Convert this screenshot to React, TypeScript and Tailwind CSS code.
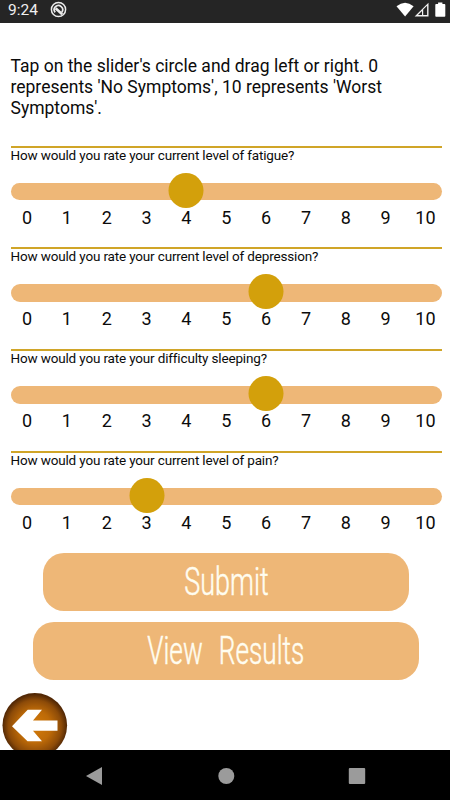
const QUESTIONS = [
  { text: 'How would you rate your current level of fatigue?', value: 4 },
  { text: 'How would you rate your current level of depression?', value: 6 },
  { text: 'How would you rate your difficulty sleeping?', value: 6 },
  { text: 'How would you rate your current level of pain?', value: 3 },
];

const TICKS = [0, 1, 2, 3, 4, 5, 6, 7, 8, 9, 10];

function StatusBar() {
  return (
    <header className="flex h-[22.5px] shrink-0 items-center bg-[#252525] pl-[8px] pr-[3.5px] text-[#f0f0f0]">
      <span className="-mt-[2px] w-[42px] text-[15.5px] leading-[20px]">9:24</span>
      <svg className="-mt-[3px] h-[17px] w-[17px]" viewBox="0 0 17 17" fill="none" stroke="#ececec">
        <circle cx="8.5" cy="8.5" r="7.1" strokeWidth="1.5" />
        <path d="M5.2 11.4A4.2 4.2 0 1 1 11.8 11.2" strokeWidth="1.7" />
        <path d="M5.6 7.2 12.2 13.2" strokeWidth="2.6" />
      </svg>
      <svg className="ml-auto h-[20px] w-[52px]" viewBox="0 0 52 20">
        <path d="M1.5 5.3Q10.1-2 18.6 5.3L10.1 15.6Z" fill="#fff" />
        <path d="M19.6 15.5 33.5 1.7V15.5Z" fill="#f2f2f2" />
        <path d="M23 14.1 27 10.1V14.1ZM28.2 8.5 32.1 4.8V14.1H28.2Z" fill="#252525" />
        <path d="M43.1 1.5h4.3v1.6h2.1q.8 0 .8.8v11.1q0 .8-.8.8h-8.4q-.8 0-.8-.8V3.9q0-.8.8-.8h2Z" fill="#fff" />
      </svg>
    </header>
  );
}

function Question({ text, value }: { text: string; value: number }) {
  return (
    <section className="flex h-[101.8px] flex-col">
      <div className="h-[2px] shrink-0 bg-[#d0a528]" />
      <p className="h-[34.9px] shrink-0 whitespace-nowrap text-[13.5px] leading-[15px] tracking-[-0.16px]">{text}</p>
      <div className="relative h-[17.5px] shrink-0 rounded-full bg-[#eeb777]">
        <span
          className="absolute -top-[10px] h-[35px] w-[35px] -translate-x-1/2 rounded-full bg-[#d3a00b]"
          style={{ left: 16.5 + value * 39.85 }}
        />
      </div>
      <div className="-ml-[3.4px] mt-[6.6px] flex w-[438.35px] text-center text-[18px] leading-[21px]">
        {TICKS.map((n) => (
          <span key={n} className="w-[39.85px] shrink-0">{n}</span>
        ))}
      </div>
    </section>
  );
}

export default function App() {
  return (
    <div className="flex h-[800px] w-[450px] flex-col overflow-hidden bg-white font-['Roboto',sans-serif] text-[#0b0b0b]">
      <StatusBar />
      <main className="flex h-[727.5px] shrink-0 flex-col overflow-hidden pl-[10.5px] pr-[8.5px]">
        <p className="mt-[33.5px] h-[89.7px] shrink-0 whitespace-nowrap text-[17.5px] leading-[21px]">
          Tap on the slider's circle and drag left or right. 0<br />
          represents 'No Symptoms', 10 represents 'Worst<br />
          Symptoms'.
        </p>
        <div className="shrink-0">
          {QUESTIONS.map((q) => (
            <Question key={q.text} text={q.text} value={q.value} />
          ))}
        </div>
        <div className="-mt-[0.2px] flex shrink-0 flex-col items-center gap-[11px] text-[38px] font-light leading-none text-[#fffdf0] [-webkit-text-stroke:0.5px_#fffdf0]">
          <button className="flex h-[58px] w-[366.5px] items-center justify-center rounded-[21px] bg-[#eeb777]">
            <span className="inline-block scale-x-[0.71]">Submit</span>
          </button>
          <button className="flex h-[58px] w-[385.5px] items-center justify-center rounded-[21px] bg-[#eeb777]">
            <span className="inline-block scale-x-[0.69] whitespace-nowrap [word-spacing:14px]">View Results</span>
          </button>
        </div>
        <button className="-ml-[8.5px] mt-[12.3px] h-[66px] w-[66px] shrink-0">
          <svg viewBox="0 0 66 66" className="h-full w-full">
            <defs>
              <radialGradient id="orb" cx="50%" cy="52%" r="50%">
                <stop offset="0" stopColor="#d47b08" />
                <stop offset="0.5" stopColor="#bd6a08" />
                <stop offset="0.82" stopColor="#8d4b08" />
                <stop offset="1" stopColor="#522805" />
              </radialGradient>
            </defs>
            <circle cx="32.8" cy="33.3" r="32.3" fill="url(#orb)" />
            <path d="M10 34.2 25.7 17.8H40L31 28.5H55.5V38.8H31L40 49.2H25.5Z" fill="#fff" />
          </svg>
        </button>
      </main>
      <nav className="flex h-[50px] shrink-0 items-center bg-black pl-[85px] pr-[84px]">
        <svg className="h-[20px] w-full" viewBox="0 0 281 20" fill="#9b9b9b">
          <path d="M1 11 17 2V20Z" />
          <circle cx="141.3" cy="11" r="8" />
          <rect x="263.8" y="3" width="16.4" height="16" rx="1" />
        </svg>
      </nav>
    </div>
  );
}
